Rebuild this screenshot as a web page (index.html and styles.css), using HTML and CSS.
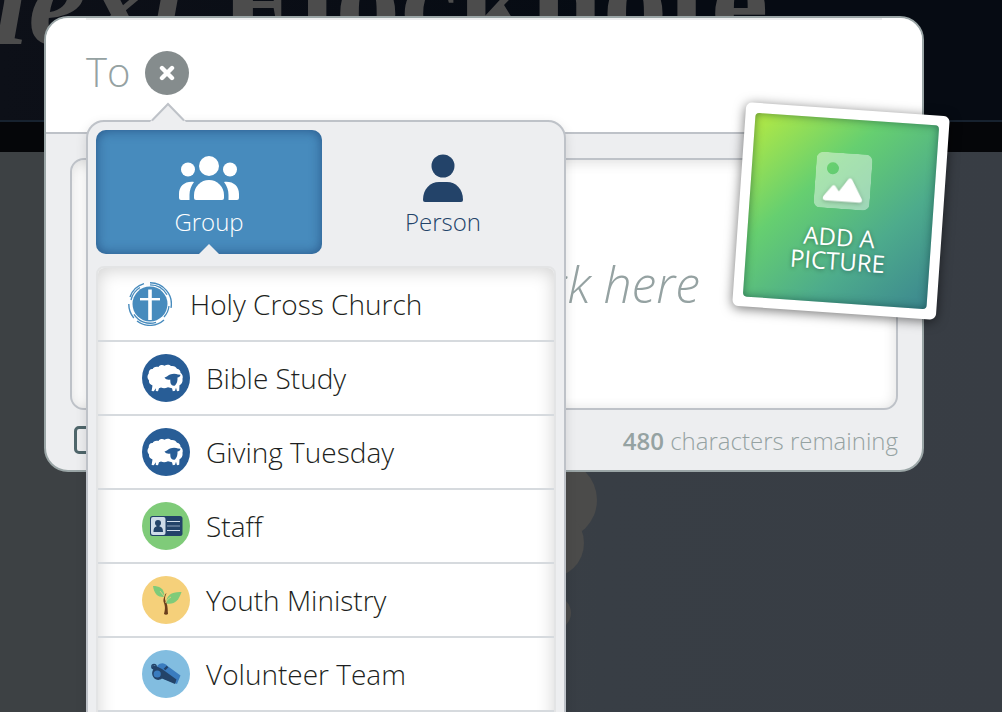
FILE: index.html
```html
<!DOCTYPE html>
<html lang="en">
<head>
  <meta charset="UTF-8">
  <meta name="viewport" content="width=device-width, initial-scale=1">
  <title>New Note</title>
  <link rel="stylesheet" href="styles.css">
</head>
<body>

  <!-- Dimmed page behind the composer -->
  <div class="backdrop" aria-hidden="true">
    <div class="hero">
      <div class="hero__title"><em>next</em> Flocknote</div>
    </div>
    <div class="hero__bar"></div>
    <svg class="backdrop__tree" width="120" height="200" viewBox="500 450 120 200">
      <circle cx="557" cy="500" r="40"/>
      <circle cx="549" cy="543" r="35"/>
      <circle cx="554" cy="613" r="17"/>
    </svg>
  </div>

  <!-- Composer -->
  <main class="composer">
    <div class="recipients">
      <div class="recipients__field">
        <span class="recipients__label">To</span>
        <button class="close" type="button" aria-label="Close">
          <svg width="16" height="16" viewBox="0 0 16 16">
            <path d="M3 3l10 10M13 3L3 13" fill="none" stroke="#fff" stroke-width="4.4" stroke-linecap="round"/>
          </svg>
        </button>
      </div>
    </div>

    <div class="message">
      <textarea class="message__text" placeholder="click here" aria-label="Message"></textarea>
      <div class="message__footer">
        <input class="message__check" type="checkbox" aria-label="Allow replies">
        <span><strong>480</strong> characters remaining</span>
      </div>
    </div>

    <!-- Group / person picker -->
    <div class="picker">
      <svg class="picker__arrow" width="36" height="20" viewBox="0 0 36 20">
        <path d="M0 20L2 18L18 1L34 18L36 20z" fill="#edeef0"/>
        <path d="M2 18.500L18 2L34 18.500" fill="none" stroke="#bec2c8" stroke-width="2"/>
      </svg>
      <div class="tabs">
        <button class="tab tab--active" type="button">
          <svg width="60" height="48" viewBox="0 0 60 48" fill="currentColor">
            <circle cx="30" cy="12" r="10"/>
            <circle cx="9" cy="15.500" r="7"/>
            <circle cx="51" cy="15.500" r="7"/>
            <path d="M15 44V41a15 15 0 0 1 30 0v3q0 2-2 2H17q-2 0-2-2z"/>
            <path d="M0 44v-4c0-8 6-13 15-12-3 4-4.500 8-4.500 13v5H2q-2 0-2-2z"/>
            <path d="M60 44v-4c0-8-6-13-15-12 3 4 4.500 8 4.500 13v5H58q2 0 2-2z"/>
          </svg>
          <span>Group</span>
        </button>
        <button class="tab" type="button">
          <svg width="40" height="48" viewBox="0 0 40 48" fill="currentColor">
            <circle cx="20" cy="12" r="11.500"/>
            <path d="M0 46C0 35 7 28 16 28h8c9 0 16 7 16 18q0 2-2 2H2q-2 0-2-2z"/>
          </svg>
          <span>Person</span>
        </button>
      </div>

      <ul class="groups">
        <li>
          <button class="group group--parent" type="button">
            <svg class="group__icon" viewBox="0 0 44 44">
              <circle cx="22" cy="22" r="17.500" fill="#478bbd"/>
              <g fill="none" stroke="#478bbd">
                <path d="M22 .8a21.200 21.200 0 0 1 21 25M36 38a21.200 21.200 0 0 1-27 1M.8 22a21.200 21.200 0 0 0 5 14M2 15A21.200 21.200 0 0 1 16 1.700" stroke-width="1.400"/>
                <path d="M22 2.800a19.200 19.200 0 0 1 17 10M41 24a19.200 19.200 0 0 1-5 11M28 40.300a19.200 19.200 0 0 1-22-8M3 18A19.200 19.200 0 0 1 12 5.500" stroke-width="1.300"/>
              </g>
              <path d="M22 7.500v30.500" stroke="#fff" stroke-width="3.600"/>
              <path d="M12 17.200h20" stroke="#fff" stroke-width="2.400"/>
            </svg>
            Holy Cross Church
          </button>
        </li>
        <li>
          <button class="group" type="button">
            <svg class="group__icon" viewBox="0 0 48 48">
              <circle cx="24" cy="24" r="24" fill="#285d96"/>
              <g id="sheep">
                <path fill="#fff" d="M16.500 13c1-2 4-2.500 6-1.300 2-1.200 5-1.200 6.500.3 3-.5 5 .8 6 2.800 2.500.5 3.500 2 3.500 4 2 1.500 2.800 4 2 6 .5 3-.8 5.500-3 6.500l-.3 5.500-2.200.5-1-3.500-1 3-2.200.5-.8-3-4-1c-3 1.200-5 1-7 .2l-2 .8-1 3-2.200-.3v-2.700l-2 3-2.200-.3.900-5.500c-2.500-1-4-3-3.500-5-2-2-2-5-.3-7-.2-3 1.800-5 4-4.500.3-1.500 3-3 5.800-2z"/>
                <path fill="#285d96" d="M22.500 23.500c2-.3 3.500-2 5.500-3 3-1.300 6-1 8 0l2.500.3c-.3 1.700-1.500 2.600-3 2.700.2 3-.5 6-2.500 8-2 .8-4-.5-4.500-2.500l-.3-3.500c-2 .6-4.500 0-5.700-2z"/>
              </g>
            </svg>
            Bible Study
          </button>
        </li>
        <li>
          <button class="group" type="button">
            <svg class="group__icon" viewBox="0 0 48 48">
              <circle cx="24" cy="24" r="24" fill="#285d96"/>
              <use href="#sheep"/>
            </svg>
            Giving Tuesday
          </button>
        </li>
        <li>
          <button class="group" type="button">
            <svg class="group__icon" viewBox="0 0 48 48">
              <circle cx="24" cy="24" r="24" fill="#7fcb79"/>
              <rect x="8" y="14" width="32.500" height="20" rx="2.500" fill="#234369"/>
              <rect x="9" y="15" width="14.500" height="18" rx="2" fill="#cfdce9"/>
              <circle cx="16" cy="21" r="3" fill="#234369"/>
              <path d="M14.500 22h3v2.500c2.500.5 3.500 1.500 3.500 5.500h-9.500c0-4 1-5 3-5.500z" fill="#234369"/>
              <path d="M25 19.500h13M25 28.500h13" stroke="#cfdce9" stroke-width="1"/>
              <path d="M25 24h13" stroke="#7d94ad" stroke-width="1.200"/>
            </svg>
            Staff
          </button>
        </li>
        <li>
          <button class="group" type="button">
            <svg class="group__icon" viewBox="0 0 48 48">
              <circle cx="24" cy="24" r="24" fill="#f5d07a"/>
              <path d="M11 10c6 0 11 2 11.500 10L21 21c-5 0-9-3-10-11z" fill="#7fcb79"/>
              <path d="M39.500 16c-3 9-7 13-15.500 11.500C24 19 30 15.500 39.500 16z" fill="#7fcb79"/>
              <path d="M22 21.500c1.500-3 .5-3 2.500-4.500-2 5-2 6 0 10 1.500 4 1 7 1.500 11q-2 1.500-4 0c1.500-6 1-8 0-11-1-2-.5-4 0-5.500z" fill="#6a3e1c"/>
              <path d="M23.500 27c1-3 3-4.500 5.500-6M22 20l-4-5" fill="none" stroke="#f5d07a" stroke-width=".8"/>
            </svg>
            Youth Ministry
          </button>
        </li>
        <li>
          <button class="group" type="button">
            <svg class="group__icon" viewBox="0 0 48 48">
              <circle cx="24" cy="24" r="24" fill="#82bde0"/>
              <path d="M15.500 15.500c3-3 7-3 10 .5l13 9.500-3.500 8.500L14 26z" fill="#3a7cbf"/>
              <path d="M9.500 18l1.500-3 4 1.500 5 2.500 14.500 10.500-1.500 4.500L20 28.500c-4 3-8 1-9.500-3-.8-2.500-.2-4.500.8-6z" fill="#234369"/>
              <circle cx="15.200" cy="24" r="3.600" fill="#3a7cbf"/>
              <circle cx="12" cy="16.500" r="2.200" fill="none" stroke="#234369" stroke-width="1.300"/>
              <path d="M22.500 19.500l3-3" stroke="#234369" stroke-width="2.400"/>
            </svg>
            Volunteer Team
          </button>
        </li>
      </ul>
    </div>

    <!-- Tilted polaroid in the corner -->
    <button class="picture" type="button">
      <span class="picture__inner">
        <svg class="picture__icon" viewBox="0 0 56 56">
          <defs>
            <mask id="sun">
              <rect width="56" height="56" rx="7" fill="#fff"/>
              <circle cx="17" cy="16" r="6" fill="#000"/>
            </mask>
          </defs>
          <rect width="56" height="56" fill="#fff" fill-opacity=".43" mask="url(#sun)"/>
          <path class="picture__hills" d="M9.500 44L17 34q2-2.500 4 0l3.500 4.500L33 26q2-2.500 4 0l11 19q1 3-2 3.500H11.500q-4-.5-2-4.500z" fill="#fff"/>
        </svg>
        ADD A<br>PICTURE
      </span>
    </button>
  </main>

</body>
</html>
```
FILE: styles.css
```css
* {
  box-sizing: border-box;
}

body {
  margin: 0;
  height: 100vh;
  overflow: hidden;
  background: #3a4045;
  font-family: "Open Sans", sans-serif;
  font-weight: 300;
  color: #1d1f21;
}

button {
  border: 0;
  padding: 0;
  background: none;
  font: inherit;
  color: inherit;
  cursor: pointer;
}

/* Backdrop */
.backdrop {
  position: absolute;
  inset: 0;
  overflow: hidden;
  background: linear-gradient(90deg, #3d4144 0, #3d4144 30%, #383e45 60%, #383d44 100%);
}

.hero {
  height: 122px;
  overflow: hidden;
  border-bottom: 2px solid #17222f;
  background: linear-gradient(90deg, #0d1018, #060b13 60%);
}

.hero__title {
  margin: -72px 0 0 -44px;
  font: bold 130px/144px "Liberation Serif", serif;
  white-space: nowrap;
  color: #4c4c4c;
}

.hero__bar {
  height: 30px;
  background: #050609;
}

.backdrop__tree {
  position: absolute;
  left: 500px;
  top: 450px;
  fill: #4b4b4a;
}

/* Composer */
.composer {
  position: relative;
  margin: 16px 78px 0 44px;
  border: 2px solid #9aa5a6;
  border-radius: 24px;
  background: #edeef0;
}

.recipients {
  padding: 0 40px;
  border-bottom: 2px solid #bec2c8;
  border-radius: 22px 22px 0 0;
  background: #fff;
}

.recipients__field {
  display: flex;
  align-items: center;
  gap: 15px;
  height: 114px;
  padding-bottom: 6px;
  border-top: 2px solid #edeeef;
}

.recipients__label {
  padding-bottom: 4px;
  font-size: 40px;
  color: #95a2a2;
}

.close {
  display: flex;
  align-items: center;
  justify-content: center;
  width: 44px;
  height: 44px;
  border-radius: 50%;
  background: #858c8d;
}

.message {
  padding: 24px 24px 6px;
}

.message__text {
  display: block;
  width: 100%;
  height: 252px;
  padding: 92px 196px 0 24px;
  border: 2px solid #bec2c8;
  border-radius: 14px;
  background: #fff;
  box-shadow: inset 0 2px 14px rgba(0, 0, 0, .14);
  font: italic 300 50px/64px "Open Sans", sans-serif;
  text-align: right;
  resize: none;
  overflow: hidden;
}

.message__text::placeholder {
  color: #95a2a2;
  opacity: 1;
}

.message__footer {
  display: flex;
  align-items: center;
  justify-content: space-between;
  height: 48px;
  margin-top: 6px;
  padding-left: 4px;
  font-size: 24px;
  color: #95a2a2;
}

.message__footer strong {
  font-weight: 600;
}

.message__check {
  appearance: none;
  width: 28px;
  height: 28px;
  margin: 0;
  border: 3px solid #4f666b;
  border-radius: 5px;
}

/* Picker */
.picker {
  position: absolute;
  top: 102px;
  left: 40px;
  width: 480px;
  padding: 8px;
  border: 2px solid #bec2c8;
  border-radius: 18px;
  background: #edeef0;
  box-shadow: 0 4px 12px rgba(0, 0, 0, .12);
}

.picker__arrow {
  position: absolute;
  top: -20px;
  left: 62px;
}

.tabs {
  display: flex;
  gap: 8px;
}

.tab {
  position: relative;
  display: flex;
  flex: 1;
  flex-direction: column;
  align-items: center;
  height: 124px;
  padding-top: 24px;
  border-radius: 10px;
  font-size: 24px;
  line-height: 40px;
  color: #234369;
}

.tab--active {
  background: #478bbd;
  box-shadow: inset 0 0 12px rgba(20, 50, 100, .6);
  color: #fff;
}

/* notch pointing up from the list */
.tab--active::after {
  content: "";
  position: absolute;
  bottom: 0;
  left: 50%;
  margin-left: -10px;
  border: 10px solid transparent;
  border-top: 0;
  border-bottom-color: #edeef0;
}

.groups {
  margin: 12px 0 0;
  padding: 0 0 60px;
  border: 2px solid #e3e4e5;
  border-radius: 8px;
  background: #fff;
  box-shadow: inset 0 2px 18px rgba(0, 0, 0, .18);
  list-style: none;
}

.group {
  display: flex;
  align-items: center;
  gap: 16px;
  width: 100%;
  height: 74px;
  padding-left: 44px;
  border-bottom: 2px solid #d6dade;
  font-size: 28px;
}

.group__icon {
  width: 48px;
  height: 48px;
}

.group--parent {
  gap: 18px;
  padding-left: 30px;
}

.group--parent .group__icon {
  width: 44px;
  height: 44px;
}

/* Picture */
.picture {
  position: absolute;
  top: 91px;
  right: -21px;
  width: 204px;
  height: 204px;
  padding: 10px;
  border-radius: 6px;
  background: #fff;
  box-shadow: 0 2px 12px rgba(0, 0, 0, .55);
  transform: rotate(4deg);
}

.picture__inner {
  display: flex;
  flex-direction: column;
  align-items: center;
  height: 100%;
  padding-top: 34px;
  border-radius: 4px;
  background: linear-gradient(135deg, #b5ea43, #66cf70 35%, #4dab8c 68%, #3c878f);
  box-shadow: inset 0 0 8px rgba(0, 40, 40, .5);
  font-size: 24px;
  font-weight: 500;
  line-height: 24px;
  color: #fff;
  text-shadow: 0 1px 4px rgba(0, 0, 0, .35);
}

.picture__icon {
  width: 56px;
  height: 56px;
  margin-bottom: 16px;
}

.picture__hills {
  filter: drop-shadow(0 1px 2px rgba(0, 0, 0, .25));
}
```
